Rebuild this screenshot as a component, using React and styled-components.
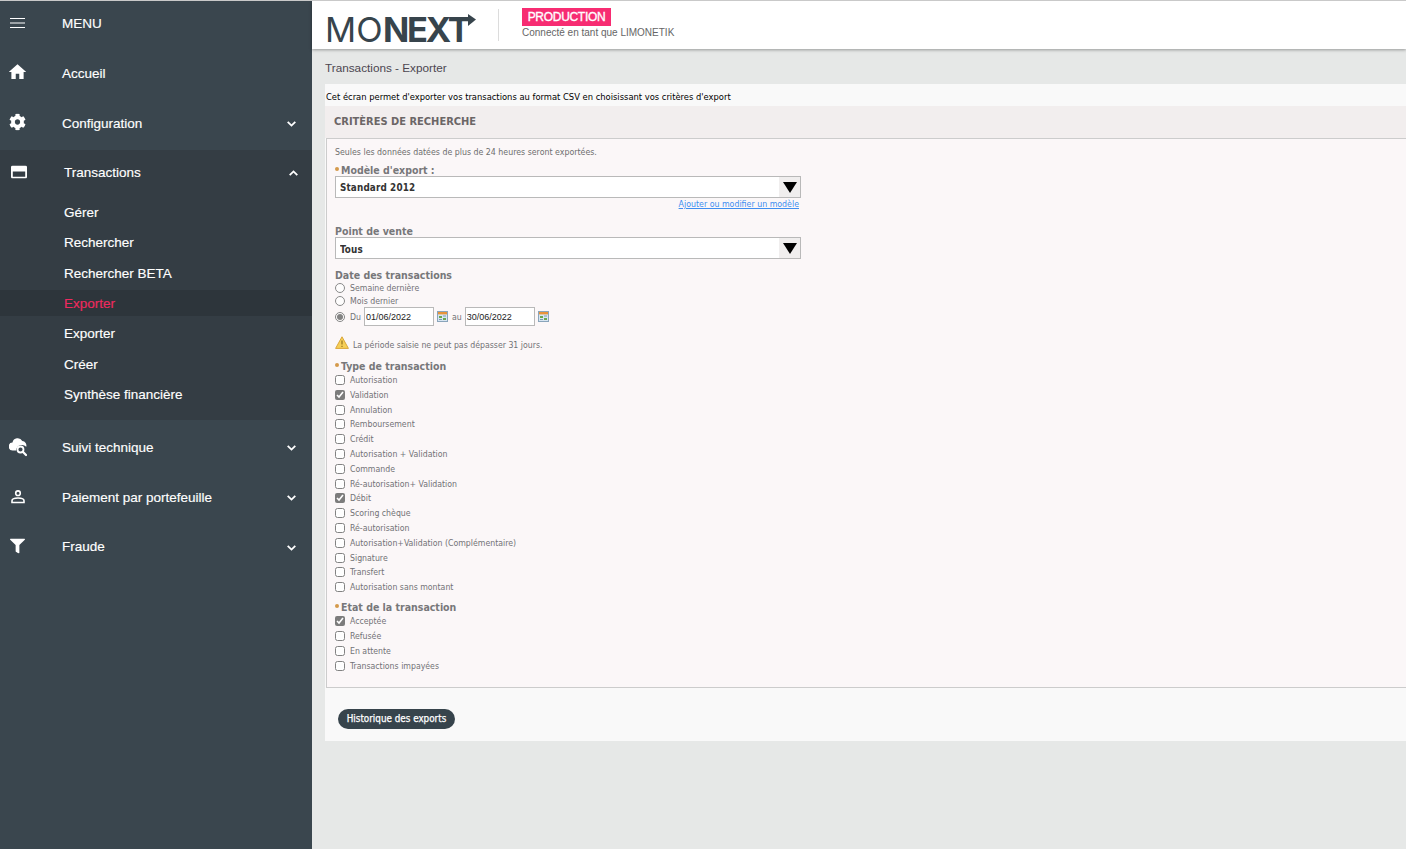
import React from 'react';
import styled, { createGlobalStyle } from 'styled-components';
import { FaCog, FaFilter } from 'react-icons/fa';
import { MdHome } from 'react-icons/md';

const Global = createGlobalStyle`
  html, body { margin: 0; padding: 0; height: 100%; }
  body { font-family: "Liberation Sans", Arial, sans-serif; overflow: hidden; background: #e6e8e7; }
  * { box-sizing: border-box; }
`;

const Page = styled.div`
  display: flex; width: 1406px; height: 849px; overflow: hidden;
  border-top: 1px solid #c9c9c9;
  background: #e6e8e7;
`;

/* ---------- sidebar ---------- */
const Sidebar = styled.nav`
  flex: 0 0 312px; height: 100%; background: #3a464e; color: #fff; font-size: 13.5px;
  -webkit-text-stroke: .15px #fff;
`;
const Row = styled.div`
  display: flex; align-items: center; height: ${p => p.$h || 50}px;
  margin-top: ${p => p.$mt || 0}px;
  margin-bottom: ${p => p.$mb || 0}px;
  padding-left: ${p => p.$pl || 62}px; position: relative;
`;
const RowIcon = styled.span`
  position: absolute; left: ${p => p.$x ?? 9}px; top: 50%; transform: translateY(-50%);
  margin-top: ${p => p.$dy ?? -1}px;
  display: flex; color: #fff;
`;
const Chev = styled.svg`
  position: absolute; right: ${p => p.$r ?? 16}px; top: 50%; margin-top: -2px;
  width: 9px; height: 6px; fill: none; stroke: #fff; stroke-width: 1.8;
`;
const Section = styled.div`
  background: #343d44; height: 270px; margin-top: 2px;
`;
const SubItem = styled.div`
  display: flex; align-items: center; height: 26px; margin-bottom: 4.33px; padding-left: 64px;
  color: ${p => p.$active ? '#ee2a5f' : '#fff'};
  -webkit-text-stroke: .15px ${p => p.$active ? '#ee2a5f' : '#fff'};
  background: ${p => p.$active ? '#2d353b' : 'transparent'};
`;

const Down = () => <Chev viewBox="0 0 9 6"><path d="M.7.8 4.5 4.6 8.3.8" /></Chev>;
const Up = () => <Chev $r={14} viewBox="0 0 9 6"><path d="M.7 5.2 4.5 1.4 8.3 5.2" /></Chev>;

/* ---------- main ---------- */
const Main = styled.main`
  flex: 1; min-width: 0; display: flex; flex-direction: column; height: 100%;
`;
const Header = styled.header`
  flex: 0 0 48px; background: #fff; display: flex; align-items: flex-start;
  box-shadow: 0 1px 3px rgba(0,0,0,.35); position: relative;
`;
const Logo = styled.div`
  width: 173px; height: 48px; margin-left: 13px; position: relative;
  display: flex; align-items: flex-start; color: #37444c; font-family: Inter, sans-serif;
  font-size: 34.5px; line-height: 48px; letter-spacing: .2px; padding-top: 5px;
`;
const LogoLight = styled.span`font-weight: 400;`;
const LogoBold = styled.span`font-weight: 700; letter-spacing: -2.2px;`;
const LogoArrow = styled.svg`
  position: absolute; left: 143px; top: 13px; width: 8px; height: 12px; fill: #37444c;
`;
const Divider = styled.div`
  width: 1px; height: 32px; margin-top: 8px; background: #dcdcdc;
`;
const EnvBlock = styled.div`
  margin-left: 23px; padding-top: 7px; display: flex; flex-direction: column; align-items: flex-start;
`;
const Badge = styled.div`
  height: 18px; width: 89px; text-align: center; background: #f72c72; color: #fff; font-size: 12px;
  line-height: 18px; letter-spacing: -.3px; -webkit-text-stroke: .35px #fff;
`;
const Connected = styled.div`
  font-size: 10px; color: #666; line-height: 13px;
`;
const Crumb = styled.div`
  height: 35px; padding: 11px 0 0 13px; font-size: 11.75px; line-height: 15px; color: #4c4650;
`;
const Panel = styled.section`
  margin-left: 13px; height: 657px; background: #f9f9f9; width: 1081px;
  font-family: "DejaVu Sans", sans-serif; font-stretch: condensed;
`;
const Intro = styled.div`
  height: 22px; padding-left: 1px; padding-top: 7px; font-size: 9.3px; line-height: 12px; color: #000;
`;
const Title = styled.h2`
  margin: 0; height: 32px; padding-left: 9px; background: #f2eeee; font-size: 11px; font-weight: 700;
  line-height: 31px; color: #6b6666;
`;
const FormBox = styled.form`
  margin-left: 1px; height: 550px; background: #fbf7f8; padding: 6px 0 0 8px;
  border: 1px solid #cccccc; border-right: 0;
`;
const Note = styled.div`
  height: 14px; margin-bottom: 5px; font-size: 8.75px; line-height: 14px; color: #6e6e6e;
`;
const Label = styled.div`
  height: 12px; margin-top: ${p => p.$mt || 0}px; font-size: 10.5px; font-weight: 700; line-height: 12px;
  color: #77777a; display: flex; align-items: center; white-space: nowrap;
`;
const Dot = styled.span`
  width: 4px; height: 4px; border-radius: 50%; background: #d49a4c; margin: 0 2px 3px 0;
`;
const SelectWrap = styled.div`
  position: relative; width: 466px; height: 22px;
`;
const Select = styled.select`
  appearance: none; display: block; width: 100%; height: 100%; background: #fff;
  border: 1px solid #b9b9b9; border-radius: 0; padding: ${p => p.$pt || 0}px 0 0 4px; font-family: inherit; font-stretch: condensed;
  font-size: 9.8px; font-weight: 700; color: #333; letter-spacing: .15px; outline: none;
`;
const Arrow = styled.span`
  position: absolute; right: 1px; top: 1px; bottom: 1px; width: 21px; background: #f0eeee;
  display: flex; align-items: center; justify-content: center; pointer-events: none;
`;
const LinkRow = styled.div`
  width: 464px; height: 12px; text-align: right; font-size: 8.75px; line-height: 12px;
`;
const A = styled.a`color: #3f8ef0; text-decoration: underline;`;
const OptRow = styled.label`
  display: flex; align-items: center; height: ${p => p.$h || 13}px; font-size: 8.7px; color: #727276;
  white-space: nowrap;
`;
const Check = styled.input`
  width: 10px; height: 10px; margin: 0 5px 0 0; flex: none; accent-color: #6f6f6f; opacity: .9;
`;
const Radio = styled.input`
  width: 10px; height: 10px; margin: 1px 5px 0 0; flex: none; accent-color: #6f6f6f; opacity: .85;
`;
const DateInput = styled.input`
  width: 70px; height: 19px; margin: 0 3px; padding: 0 1px; border: 1px solid #b9b9b9; background: #fff;
  font-family: "Liberation Sans", sans-serif; font-size: 9px; color: #222; border-radius: 0; outline: none;
`;
const Cal = styled.svg`width: 11px; height: 11px; margin: 0 4px 0 0; flex: none;`;
const Warn = styled.div`
  display: flex; align-items: center; height: 16px; margin-top: 11px; font-size: 8.7px; color: #727276;
`;
const WarnIcon = styled.svg`width: 14px; height: 13px; margin-right: 4px; margin-top: -5px; flex: none;`;
const Checks = styled.div`
  display: flex; flex-direction: column; padding-top: ${p => p.$pt || 0}px;
`;
const HistoryBtn = styled.button`
  display: block; margin: 21px 0 0 13px; height: 20px; width: 117px; padding: 0 0 2px; border: 0; border-radius: 10px;
  background: #37444c; color: #fff; font-family: inherit; font-stretch: condensed; font-size: 9.8px; font-weight: 400;
  -webkit-text-stroke: .25px #fff;
`;

const Calendar = () => (
  <Cal viewBox="0 0 11 11">
    <rect x=".5" y=".5" width="10" height="10" fill="#d7e6f2" stroke="#8aa5bb" />
    <rect x="1" y="1" width="9" height="2.4" fill="#e8943a" />
    <rect x="2" y="5" width="3" height="2" fill="#6aa84f" />
    <rect x="6" y="7" width="3" height="2" fill="#6aa84f" />
    <rect x="6" y="4.5" width="3" height="1" fill="#7d9ab3" />
    <rect x="2" y="8" width="3" height="1" fill="#7d9ab3" />
  </Cal>
);

const Opt = ({ children, on }) => (
  <OptRow $h={14.8}><Check type="checkbox" defaultChecked={!!on} />{children}</OptRow>
);

const types = [
  ['Autorisation'], ['Validation', 1], ['Annulation'], ['Remboursement'], ['Crédit'],
  ['Autorisation + Validation'], ['Commande'], ['Ré-autorisation+ Validation'], ['Débit', 1],
  ['Scoring chèque'], ['Ré-autorisation'], ['Autorisation+Validation (Complémentaire)'],
  ['Signature'], ['Transfert'], ['Autorisation sans montant'],
];
const states = [['Acceptée', 1], ['Refusée'], ['En attente'], ['Transactions impayées']];

export default function App() {
  return (
    <Page>
      <Global />
      <Sidebar>
        <Row $h={44} $mb={3}>
          <RowIcon $x={10} $dy={0}>
            <svg width="15" height="11" viewBox="0 0 15 11" fill="none" stroke="#fff" strokeWidth="1">
              <path d="M0 1h15M0 5.5h15M0 10h15" />
            </svg>
          </RowIcon>
          MENU
        </Row>
        <Row><RowIcon $x={7}><MdHome size={21} /></RowIcon>Accueil</Row>
        <Row><RowIcon><FaCog size={17} /></RowIcon>Configuration<Down /></Row>
        <Section>
          <Row $h={44} $pl={64} $mb={5.5}>
            <RowIcon $x={11} $dy={0}>
              <svg width="16" height="13" viewBox="0 0 16 13" fill="#fff">
                <path fillRule="evenodd" d="M1.5 0h13A1.500 1.500 0 0 1 16 1.500v10a1.500 1.500 0 0 1-1.500 1.500h-13A1.500 1.500 0 0 1 0 11.500v-10A1.500 1.500 0 0 1 1.500 0ZM1.800 6v5.200h12.400V6Z" />
              </svg>
            </RowIcon>
            Transactions<Up />
          </Row>
          <SubItem>Gérer</SubItem>
          <SubItem>Rechercher</SubItem>
          <SubItem>Rechercher BETA</SubItem>
          <SubItem $active>Exporter</SubItem>
          <SubItem>Exporter</SubItem>
          <SubItem>Créer</SubItem>
          <SubItem>Synthèse financière</SubItem>
        </Section>
        <Row $mt={2}>
          <RowIcon $dy={0}>
            <svg width="18" height="20" viewBox="0 0 18 20" fill="#fff">
              <path d="M4 13.500A4 4 0 0 1 3.500 5.500 5.300 5.300 0 0 1 13.300 4a4.500 4.500 0 0 1 3.900 5.800 5.800 5.800 0 0 0-10 3.700Z" />
              <circle cx="11.500" cy="12.500" r="3" fill="none" stroke="#fff" strokeWidth="1.800" />
              <path d="m13.800 14.800 3.200 3.200" stroke="#fff" strokeWidth="2.200" strokeLinecap="round" />
            </svg>
          </RowIcon>
          Suivi technique<Down />
        </Row>
        <Row>
          <RowIcon $x={11} $dy={0}>
            <svg width="14" height="14" viewBox="0 0 14 14" fill="none" stroke="#fff" strokeWidth="1.600">
              <circle cx="7" cy="3.200" r="2.300" />
              <path d="M1 12.500V10.700C1 8.800 4.500 8 7 8s6 .8 6 2.700v1.800Z" />
            </svg>
          </RowIcon>
          Paiement par portefeuille<Down />
        </Row>
        <Row $h={49}><RowIcon $x={10}><FaFilter size={15} /></RowIcon>Fraude<Down /></Row>
      </Sidebar>

      <Main>
        <Header>
          <Logo>
            <LogoLight>MO</LogoLight><LogoBold>NEXT</LogoBold>
            <LogoArrow viewBox="0 0 8 12"><path d="M0 0 8 5.500 0 12Z" /></LogoArrow>
          </Logo>
          <Divider />
          <EnvBlock>
            <Badge>PRODUCTION</Badge>
            <Connected>Connecté en tant que LIMONETIK</Connected>
          </EnvBlock>
        </Header>
        <Crumb>Transactions - Exporter</Crumb>
        <Panel>
          <Intro>Cet écran permet d'exporter vos transactions au format CSV en choisissant vos critères d'export</Intro>
          <Title>CRITÈRES DE RECHERCHE</Title>
          <FormBox>
            <Note>Seules les données datées de plus de 24 heures seront exportées.</Note>
            <Label><Dot />Modèle d'export :</Label>
            <SelectWrap>
              <Select defaultValue="s"><option value="s">Standard 2012</option></Select>
              <Arrow><svg width="14" height="11" viewBox="0 0 14 11"><path d="M0 0h14L7 11Z" fill="#000" /></svg></Arrow>
            </SelectWrap>
            <LinkRow><A href="#">Ajouter ou modifier un modèle</A></LinkRow>
            <Label $mt={15}>Point de vente</Label>
            <SelectWrap>
              <Select $pt={2} defaultValue="t"><option value="t">Tous</option></Select>
              <Arrow><svg width="14" height="11" viewBox="0 0 14 11"><path d="M0 0h14L7 11Z" fill="#000" /></svg></Arrow>
            </SelectWrap>
            <Label $mt={10}>Date des transactions</Label>
            <OptRow><Radio type="radio" name="d" />Semaine dernière</OptRow>
            <OptRow><Radio type="radio" name="d" />Mois dernier</OptRow>
            <OptRow $h={19}>
              <Radio type="radio" name="d" defaultChecked />Du
              <DateInput defaultValue="01/06/2022" />
              <Calendar />au
              <DateInput defaultValue="30/06/2022" />
              <Calendar />
            </OptRow>
            <Warn>
              <WarnIcon viewBox="0 0 14 13">
                <path d="M7 .8 13.400 12.400H.6Z" fill="#f6cf57" stroke="#d9a63a" strokeLinejoin="round" />
                <path d="M7 4.500v4M7 9.800v1.200" stroke="#8a6a1c" strokeWidth="1.100" />
              </WarnIcon>
              La période saisie ne peut pas dépasser 31 jours.
            </Warn>
            <Label $mt={7}><Dot />Type de transaction</Label>
            <Checks $pt={.7}>
              {types.map(([t, on]) => <Opt key={t} on={on}>{t}</Opt>)}
            </Checks>
            <Label $mt={6.7}><Dot />Etat de la transaction</Label>
            <Checks $pt={.7}>
              {states.map(([t, on]) => <Opt key={t} on={on}>{t}</Opt>)}
            </Checks>
          </FormBox>
          <HistoryBtn type="button">Historique des exports</HistoryBtn>
        </Panel>
      </Main>
    </Page>
  );
}
